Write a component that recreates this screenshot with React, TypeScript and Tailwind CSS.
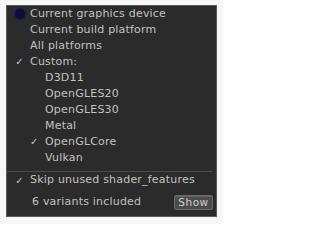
const platforms = [
  { label: "Current graphics device", checked: false, dot: true },
  { label: "Current build platform", checked: false },
  { label: "All platforms", checked: false },
  { label: "Custom:", checked: true },
];

const apis = [
  { label: "D3D11", checked: false },
  { label: "OpenGLES20", checked: false },
  { label: "OpenGLES30", checked: false },
  { label: "Metal", checked: false },
  { label: "OpenGLCore", checked: true },
  { label: "Vulkan", checked: false },
];

function Check() {
  return <span className="text-[10px] font-bold leading-none text-[#c8c8c8]">✓</span>;
}

export default function App() {
  return (
    <div
      className="h-[224px] w-[223px] bg-[#f7f7f7] pl-[6px] pt-[5px] text-[11px] tracking-[0.2px] text-[#c2c2c2]"
      style={{ fontFamily: '"DejaVu Sans", Verdana, sans-serif' }}
    >
      <div className="flex h-[212px] w-[211px] flex-col border border-[#5a5a5a] bg-[#2b2b2b]">
        {/* Platform options */}
        {platforms.map((p) => (
          <div key={p.label} className="relative flex h-4 items-center">
            <div className="flex w-[23px] items-center justify-center pl-[2px]">
              {p.dot && <div className="h-[10px] w-[10px] rounded-full bg-[#0d0d42] shadow-[0_0_2px_#0d0d42]" />}
              {p.checked && <Check />}
            </div>
            <span>{p.label}</span>
          </div>
        ))}

        {/* Graphics APIs */}
        {apis.map((a) => (
          <div key={a.label} className="flex h-4 items-center">
            <div className="w-[23px]" />
            <div className="flex w-[15px] items-center">{a.checked && <Check />}</div>
            <span>{a.label}</span>
          </div>
        ))}

        <div className="mt-[5px] mr-[4px] h-px bg-[#4a4a4a]" />

        <div className="flex h-4 items-center pt-[1px]">
          <div className="flex w-[23px] items-center justify-center pl-[2px]">
            <Check />
          </div>
          <span>Skip unused shader_features</span>
        </div>

        <div className="mt-[6px] flex items-center justify-between pl-[25px] pr-[3px]">
          <span>6 variants included</span>
          <button className="h-[15px] w-[39px] rounded-[2px] border border-[#6a6a6a] bg-[#4b4b4b] text-[10.5px] leading-none tracking-[0.5px] text-[#d0d0d0] shadow-[inset_0_1px_0_#666]">
            Show
          </button>
        </div>
      </div>
    </div>
  );
}
